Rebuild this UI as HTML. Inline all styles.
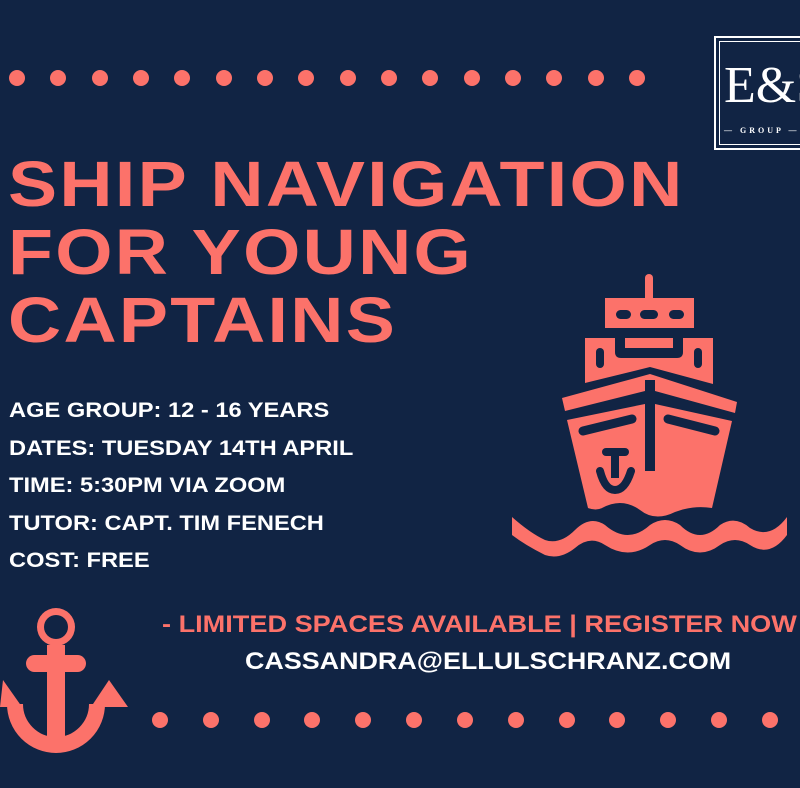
<!DOCTYPE html>
<html><head><meta charset="utf-8"><style>
html,body{margin:0;padding:0;overflow:hidden}
body{width:800px;height:788px;background:#112444;position:relative;overflow:hidden;font-family:"Liberation Sans",sans-serif;font-weight:bold}
.t{position:absolute;left:8px;color:#fc726a;font-size:64px;line-height:68px;letter-spacing:2px;top:150px;transform:scaleX(1.15);transform-origin:0 0;white-space:nowrap}
.d{position:absolute;left:9px;top:392px;color:#fff;font-size:21.5px;line-height:37.6px;transform:scaleX(1.1);transform-origin:0 0;white-space:nowrap}
.r{position:absolute;left:162px;top:611px;color:#fc726a;font-size:24px;white-space:nowrap;transform:scaleX(1.13);transform-origin:0 0}
.e{position:absolute;left:245px;top:648px;color:#fff;font-size:24px;transform:scaleX(1.12);transform-origin:0 0;white-space:nowrap}
.logo{position:absolute;left:714px;top:36px;width:86px;height:114px;border:2px solid #fff;border-right:none;box-sizing:border-box;overflow:hidden}
.logo::before{content:"";position:absolute;left:3px;top:3px;bottom:3px;right:-10px;border:1px solid #fff}
.lt{position:absolute;left:8px;top:22px;color:#fff;font-family:"Liberation Serif",serif;font-weight:normal;font-size:52px;line-height:52px;white-space:nowrap}
.lg{position:absolute;left:8px;top:88px;color:#fff;font-family:"Liberation Serif",serif;font-size:8px;letter-spacing:3px;white-space:nowrap}
</style></head><body>
<svg width="800" height="788" style="position:absolute;left:0;top:0">
<g fill="#fc726a">
<circle cx="17" cy="78" r="8"/><circle cx="58" cy="78" r="8"/><circle cx="100" cy="78" r="8"/><circle cx="141" cy="78" r="8"/><circle cx="182" cy="78" r="8"/><circle cx="224" cy="78" r="8"/><circle cx="265" cy="78" r="8"/><circle cx="306" cy="78" r="8"/><circle cx="348" cy="78" r="8"/><circle cx="389" cy="78" r="8"/><circle cx="430" cy="78" r="8"/><circle cx="472" cy="78" r="8"/><circle cx="513" cy="78" r="8"/><circle cx="554" cy="78" r="8"/><circle cx="596" cy="78" r="8"/><circle cx="637" cy="78" r="8"/>
<circle cx="160" cy="720" r="8"/><circle cx="211" cy="720" r="8"/><circle cx="262" cy="720" r="8"/><circle cx="312" cy="720" r="8"/><circle cx="363" cy="720" r="8"/><circle cx="414" cy="720" r="8"/><circle cx="465" cy="720" r="8"/><circle cx="516" cy="720" r="8"/><circle cx="567" cy="720" r="8"/><circle cx="617" cy="720" r="8"/><circle cx="668" cy="720" r="8"/><circle cx="719" cy="720" r="8"/><circle cx="770" cy="720" r="8"/>
</g>
<g fill="#fc726a">
<rect x="645" y="274" width="8" height="30" rx="4"/>
<rect x="605" y="298" width="89" height="30"/>
<path d="M585 338H713V384L650 367 585 383Z"/>
<path d="M562 398L650 374 737 402 735 413 655 391V380H645V391L565 411Z"/>
<path d="M567 420L645 404V471H655V404L732 421 712 508Q693 505 675 512Q655 522 640 510Q622 497 602 508 596 511 588 508Z"/>
<path d="M512 517Q530 533 545 540Q560 545 575 530Q590 515 605 525Q628 545 650 525Q665 515 680 525Q700 545 720 525Q735 515 750 528Q770 540 787 517V535Q770 558 750 545Q735 535 720 545Q700 560 680 545Q665 535 650 545Q628 560 605 545Q590 535 575 548Q560 560 545 555Q525 545 512 535Z"/>
</g>
<g fill="#112444">
<rect x="616" y="310" width="15" height="9" rx="4.5"/><rect x="640" y="310" width="18" height="9" rx="4.5"/><rect x="669" y="310" width="15" height="9" rx="4.5"/>
<path d="M615 338H683V352Q683 358 677 358H621Q615 358 615 352Z"/>
<rect x="625" y="338" width="48" height="10" fill="#fc726a"/>
<rect x="596" y="348" width="8" height="20" rx="4"/><rect x="694" y="348" width="8" height="20" rx="4"/>
<path d="M583 431L632 419" stroke="#112444" stroke-width="9" stroke-linecap="round"/>
<path d="M668 419L715 431" stroke="#112444" stroke-width="9" stroke-linecap="round"/>
<rect x="602" y="448" width="27" height="8" rx="4"/>
<rect x="611" y="448" width="8" height="30"/>
<path d="M600 471Q605 490 615 490Q625 490 631 471" stroke="#112444" stroke-width="8" fill="none" stroke-linecap="round"/>
</g>
<g fill="#fc726a">
<circle cx="56" cy="627" r="19"/>
<circle cx="56" cy="627" r="12" fill="#112444"/>
<rect x="26" y="655" width="60" height="17" rx="8.5"/>
<rect x="47" y="645" width="18" height="105"/>
<path d="M3 680L22 707 0 707Z"/>
<path d="M109 680L128 707 91 707Z"/>
<path d="M15 704A41 41 0 0 0 97 704" stroke="#fc726a" stroke-width="16" fill="none"/>
</g>
</svg>
<div class="t">SHIP NAVIGATION<br>FOR YOUNG<br>CAPTAINS</div>
<div class="d">AGE GROUP: 12 - 16 YEARS<br>DATES: TUESDAY 14TH APRIL<br>TIME: 5:30PM VIA ZOOM<br>TUTOR: CAPT. TIM FENECH<br>COST: FREE</div>
<div class="r">- LIMITED SPACES AVAILABLE | REGISTER NOW</div>
<div class="e">CASSANDRA@ELLULSCHRANZ.COM</div>
<div class="logo"><div class="lt">E&amp;S</div><div class="lg">— GROUP —</div></div>
</body></html>
